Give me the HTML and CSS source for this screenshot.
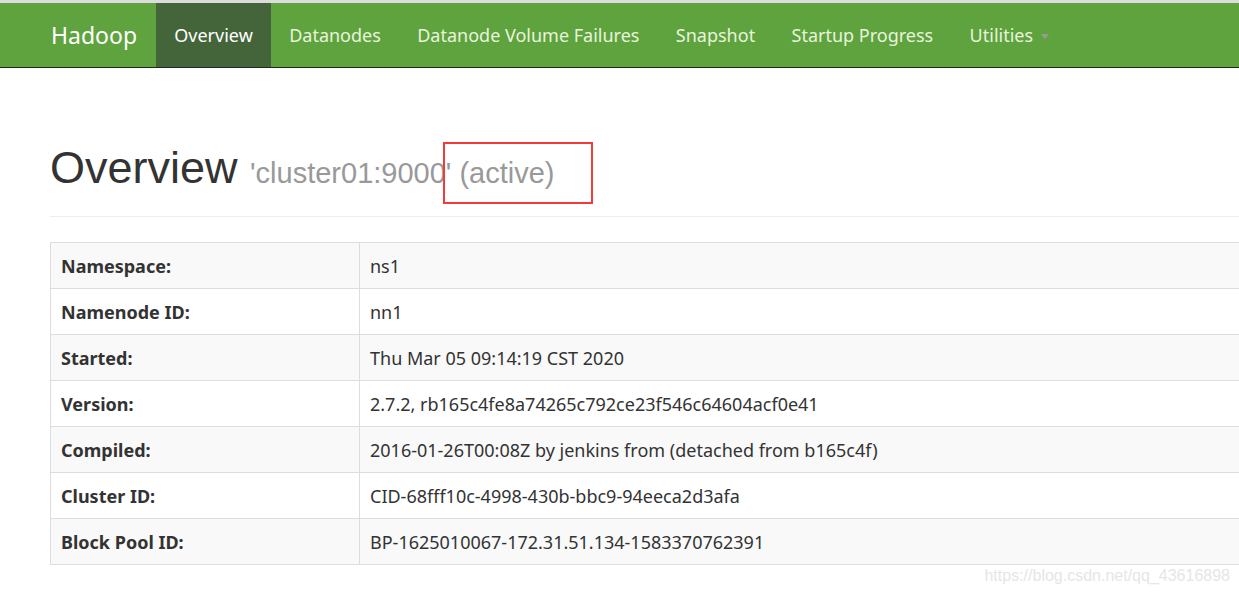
FILE: index.html
```html
<!DOCTYPE html>
<html>
<head>
<meta charset="utf-8">
<title>Namenode information</title>
<link rel="stylesheet" href="styles.css">
</head>
<body>
<div class="chrome"></div>
<nav class="navbar">
  <a class="brand">Hadoop</a>
  <ul class="nav">
    <li class="active"><a>Overview</a></li>
    <li><a>Datanodes</a></li>
    <li><a>Datanode Volume Failures</a></li>
    <li><a>Snapshot</a></li>
    <li><a>Startup Progress</a></li>
    <li><a>Utilities <span class="caret"></span></a></li>
  </ul>
</nav>
<main class="page">
  <div class="page-header">
    <h1>Overview <small>'cluster01:9000' <span class="mark">(active)</span></small></h1>
  </div>
  <table class="info">
    <tr><th>Namespace:</th><td>ns1</td></tr>
    <tr><th>Namenode ID:</th><td>nn1</td></tr>
    <tr><th>Started:</th><td>Thu Mar 05 09:14:19 CST 2020</td></tr>
    <tr><th>Version:</th><td>2.7.2, rb165c4fe8a74265c792ce23f546c64604acf0e41</td></tr>
    <tr><th>Compiled:</th><td>2016-01-26T00:08Z by jenkins from (detached from b165c4f)</td></tr>
    <tr><th>Cluster ID:</th><td>CID-68fff10c-4998-430b-bbc9-94eeca2d3afa</td></tr>
    <tr><th>Block Pool ID:</th><td>BP-1625010067-172.31.51.134-1583370762391</td></tr>
  </table>
</main>
<div class="watermark">https://blog.csdn.net/qq_43616898</div>
</body>
</html>
```
FILE: styles.css
```css
html, body {
  margin: 0;
  padding: 0;
  background: #fff;
  overflow: hidden;
}
body {
  width: 1239px;
  height: 592px;
  position: relative;
  font-family: "Noto Sans", "Open Sans", sans-serif;
  color: #333;
}
.chrome {
  height: 3px;
  background: #dcdcdc;
}
.navbar {
  display: flex;
  align-items: stretch;
  height: 64px;
  background: #5fa33e;
  border-bottom: 1px solid #1f2a1a;
}
.brand {
  display: flex;
  align-items: center;
  padding: 0 19px 0 51px;
  font-size: 23px;
  color: #fff;
}
.nav {
  display: flex;
  list-style: none;
  margin: 0;
  padding: 0;
}
.nav li {
  display: flex;
}
.nav li a {
  display: flex;
  align-items: center;
  padding: 0 18.2px;
  font-size: 18px;
  color: #e8f4dc;
}
.nav li.active a {
  background: #44653a;
  color: #fff;
}
.caret {
  display: inline-block;
  width: 0;
  height: 0;
  margin-left: 8px;
  margin-top: 3px;
  border-left: 4px solid transparent;
  border-right: 4px solid transparent;
  border-top: 5px solid #9a9a9a;
}
.page {
  padding-left: 50px;
  width: 1260px;
}
.page-header {
  margin-top: 69px;
  padding-bottom: 12px;
  border-bottom: 1px solid #eeeeee;
}
h1 {
  margin: 0;
  font-family: "Liberation Sans", Arial, sans-serif;
  font-weight: 400;
  font-size: 45px;
  line-height: 62px;
  color: #333;
}
h1 small {
  font-size: 29px;
  color: #999;
}
.mark {
  position: relative;
}
.mark::before {
  content: "";
  position: absolute;
  left: -16px;
  top: -15px;
  width: 146px;
  height: 58px;
  border: 2px solid #f33a3a;
}
.info {
  margin-top: 25px;
  border-collapse: collapse;
  width: 1230px;
  font-size: 18px;
}
.info th, .info td {
  border: 1px solid #dddddd;
  height: 45px;
  padding: 0 10px;
  text-align: left;
  color: #333;
}
.info th {
  width: 288px;
  font-weight: 700;
}
.info tr:nth-child(odd) {
  background: #f9f9f9;
}
.watermark {
  position: absolute;
  right: 9px;
  bottom: 7px;
  font-family: "Liberation Sans", Arial, sans-serif;
  font-size: 16px;
  color: #e6e6e6;
}
```
